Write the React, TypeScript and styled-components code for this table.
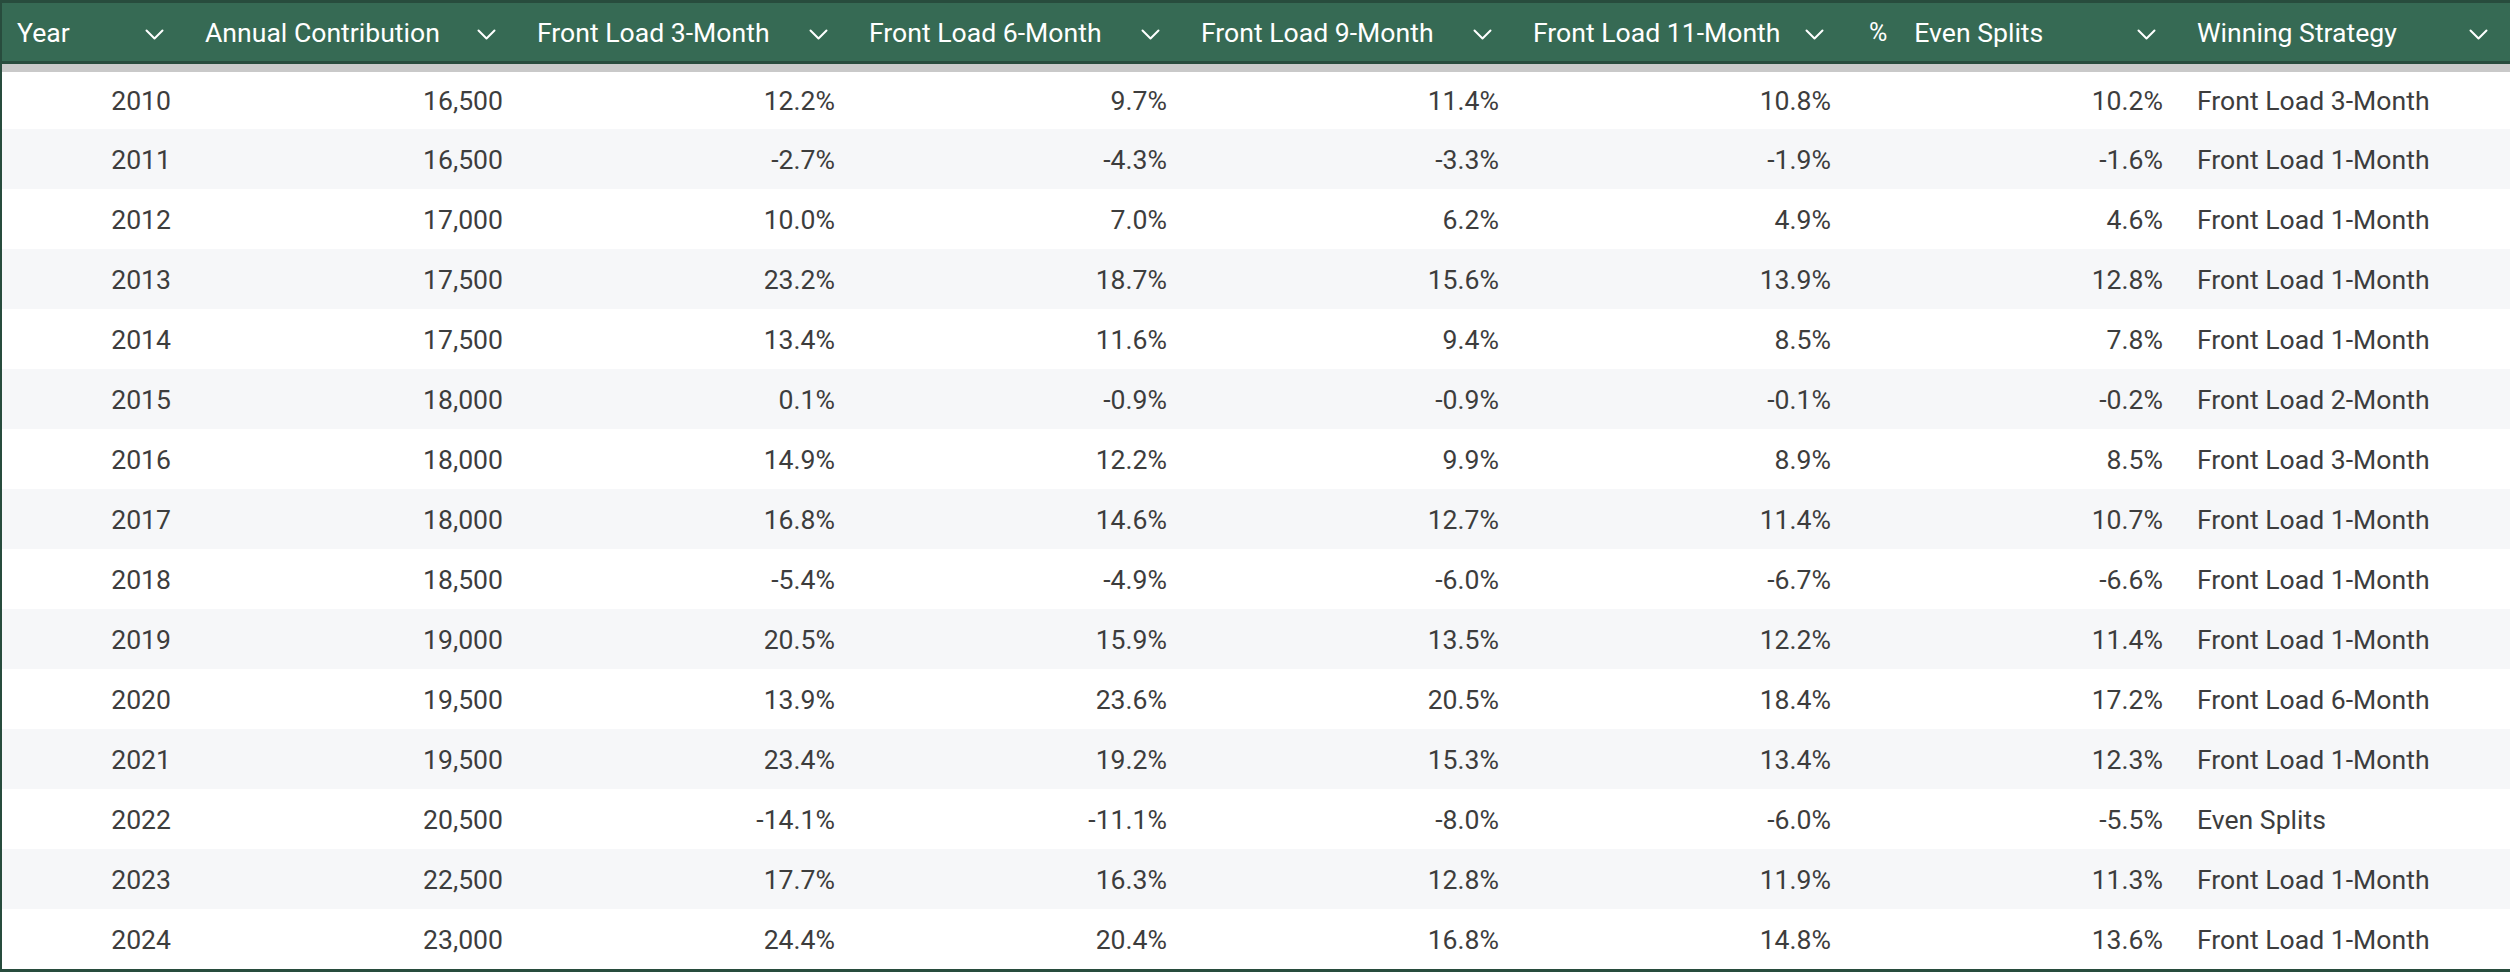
import React from "react";
import styled, { createGlobalStyle } from "styled-components";

const GlobalStyle = createGlobalStyle`
  html, body {
    margin: 0;
    padding: 0;
    background: #ffffff;
    overflow: hidden;
  }
`;

const GRID_COLUMNS = "186px repeat(7, 332px)";

const Frame = styled.div`
  width: 2510px;
  overflow: hidden;
  border-top: 3px solid #284c3d;
  border-bottom: 3px solid #284c3d;
  border-left: 2px solid #284c3d;
  box-sizing: border-box;
  font-family: Roboto, "Liberation Sans", sans-serif;
`;

const HeaderRow = styled.div`
  display: grid;
  grid-template-columns: ${GRID_COLUMNS};
  height: 58px;
  background-color: #366a54;
  border-bottom: 3px solid #284c3d;
`;

const HeaderCell = styled.div`
  display: flex;
  align-items: center;
  justify-content: space-between;
  padding: 0 24px 0 17px;
  color: #ffffff;
  font-size: 26.6px;
  white-space: nowrap;
  overflow: hidden;

  &:first-child {
    padding-left: 15px;
  }
`;

const HeaderLabel = styled.div`
  display: flex;
  align-items: center;
  gap: 27px;
`;

const PercentMark = styled.span`
  margin-left: 4px;
  font-size: 25px;
`;

const ChevronBox = styled.span`
  display: flex;
  margin-top: 5px;
`;

const Shadow = styled.div`
  height: 8px;
  background-color: #c9c9c9;
`;

const Row = styled.div<{ striped: boolean; first: boolean }>`
  display: grid;
  grid-template-columns: ${GRID_COLUMNS};
  height: ${({ first }) => (first ? "57px" : "60px")};
  background-color: ${({ striped }) => (striped ? "#f6f7f9" : "#ffffff")};
`;

const Cell = styled.div<{ align: "left" | "right" }>`
  display: flex;
  align-items: center;
  justify-content: ${({ align }) => (align === "right" ? "flex-end" : "flex-start")};
  padding: 0 17px;
  color: #3d3d3d;
  font-size: 26.6px;
  white-space: nowrap;
`;

const Chevron = () => (
  <ChevronBox>
    <svg width="19" height="11" viewBox="0 0 19 11" fill="none">
      <polyline
        points="1.5,1.5 9.5,9.5 17.5,1.5"
        stroke="#ffffff"
        strokeWidth="2"
        strokeLinecap="round"
        strokeLinejoin="round"
      />
    </svg>
  </ChevronBox>
);

const headers = [
  "Year",
  "Annual Contribution",
  "Front Load 3-Month",
  "Front Load 6-Month",
  "Front Load 9-Month",
  "Front Load 11-Month",
  "Even Splits",
  "Winning Strategy",
];

const rows: string[][] = [
  ["2010", "16,500", "12.2%", "9.7%", "11.4%", "10.8%", "10.2%", "Front Load 3-Month"],
  ["2011", "16,500", "-2.7%", "-4.3%", "-3.3%", "-1.9%", "-1.6%", "Front Load 1-Month"],
  ["2012", "17,000", "10.0%", "7.0%", "6.2%", "4.9%", "4.6%", "Front Load 1-Month"],
  ["2013", "17,500", "23.2%", "18.7%", "15.6%", "13.9%", "12.8%", "Front Load 1-Month"],
  ["2014", "17,500", "13.4%", "11.6%", "9.4%", "8.5%", "7.8%", "Front Load 1-Month"],
  ["2015", "18,000", "0.1%", "-0.9%", "-0.9%", "-0.1%", "-0.2%", "Front Load 2-Month"],
  ["2016", "18,000", "14.9%", "12.2%", "9.9%", "8.9%", "8.5%", "Front Load 3-Month"],
  ["2017", "18,000", "16.8%", "14.6%", "12.7%", "11.4%", "10.7%", "Front Load 1-Month"],
  ["2018", "18,500", "-5.4%", "-4.9%", "-6.0%", "-6.7%", "-6.6%", "Front Load 1-Month"],
  ["2019", "19,000", "20.5%", "15.9%", "13.5%", "12.2%", "11.4%", "Front Load 1-Month"],
  ["2020", "19,500", "13.9%", "23.6%", "20.5%", "18.4%", "17.2%", "Front Load 6-Month"],
  ["2021", "19,500", "23.4%", "19.2%", "15.3%", "13.4%", "12.3%", "Front Load 1-Month"],
  ["2022", "20,500", "-14.1%", "-11.1%", "-8.0%", "-6.0%", "-5.5%", "Even Splits"],
  ["2023", "22,500", "17.7%", "16.3%", "12.8%", "11.9%", "11.3%", "Front Load 1-Month"],
  ["2024", "23,000", "24.4%", "20.4%", "16.8%", "14.8%", "13.6%", "Front Load 1-Month"],
];

const App = (): JSX.Element => {
  return (
    <>
      <GlobalStyle />
      <Frame>
        <HeaderRow>
          {headers.map((h) => (
            <HeaderCell key={h}>
              <HeaderLabel>
                {h === "Even Splits" && <PercentMark>%</PercentMark>}
                <span>{h}</span>
              </HeaderLabel>
              <Chevron />
            </HeaderCell>
          ))}
        </HeaderRow>
        <Shadow />
        {rows.map((r, i) => (
          <Row key={r[0]} striped={i % 2 === 1} first={i === 0}>
            {r.map((v, j) => (
              <Cell key={j} align={j === 7 ? "left" : "right"}>
                {v}
              </Cell>
            ))}
          </Row>
        ))}
      </Frame>
    </>
  );
};

export default App;
